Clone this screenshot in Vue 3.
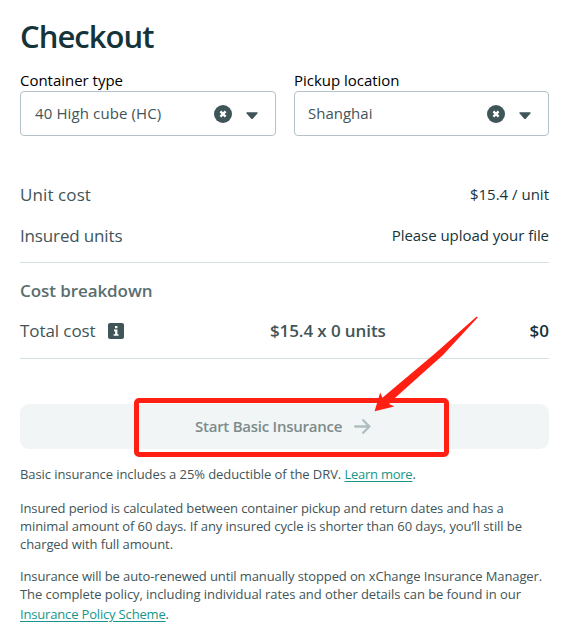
<template>
  <main class="checkout">
    <h1 class="title">Checkout</h1>

    <div class="fields">
      <div v-for="field in fields" :key="field.label" class="field">
        <label class="field-label">{{ field.label }}</label>
        <div class="select">
          <span class="select-value" :class="field.key">{{ field.value }}</span>
          <button type="button" class="icon-btn" aria-label="Clear">
            <svg class="clear-icon" viewBox="0 0 18 18">
              <circle cx="9" cy="9" r="9" />
              <path d="M6.4 6.4l5.2 5.2M11.6 6.4l-5.2 5.2" />
            </svg>
          </button>
          <button type="button" class="icon-btn" aria-label="Open">
            <svg class="caret-icon" viewBox="0 0 12 8">
              <path d="M1 0.2h10q1.2 0.2 0.4 1.2L7 6.6q-1 1-2 0L0.6 1.4Q-0.2 0.4 1 0.2z" />
            </svg>
          </button>
        </div>
      </div>
    </div>

    <section class="summary">
      <div class="row">
        <span class="row-label unit-cost">Unit cost</span>
        <span class="row-value">$15.4 / unit</span>
      </div>
      <div class="row">
        <span class="row-label insured">Insured units</span>
        <span class="row-value upload">Please upload your file</span>
      </div>
    </section>

    <section class="breakdown">
      <h2 class="subtitle">Cost breakdown</h2>
      <div class="total">
        <span class="row-label total-label">
          Total cost
          <svg class="info-icon" viewBox="0 0 16 16">
            <rect width="16" height="16" rx="2" />
            <path d="M7 3h2.4v2.2H7zM6 6.6h3.4v4.6h1.2v1.6H5.6v-1.6h1.5V8.2H6z" />
          </svg>
        </span>
        <strong class="formula">$15.4 x 0 units</strong>
        <strong class="sum">$0</strong>
      </div>
    </section>

    <div class="action">
      <button type="button" class="start-btn" disabled>
        <span class="start-text">Start Basic Insurance</span>
        <svg class="arrow-icon" viewBox="0 0 17 15">
          <path d="M1.2 7.5h14.2M9.2 1.3l6.2 6.2-6.2 6.2" />
        </svg>
      </button>
      <div class="highlight"></div>
      <svg class="pointer" viewBox="0 0 104 96">
        <path d="M0.6 95.2L6.2 76.5L8.4 81.8L61 37.5L102.4 0.8Q104 0.4 103.5 1.8L69 39L21.2 81.8L15.2 88L20.3 90.6z" />
      </svg>
    </div>

    <div class="notes">
      <p class="deductible">Basic insurance includes a 25% deductible of the DRV. <a href="#">Learn more</a>.</p>
      <p>
        <span class="line period">Insured period is calculated between container pickup and return dates and has a</span>
        <span class="line">minimal amount of 60 days. If any insured cycle is shorter than 60 days, you’ll still be</span>
        <span class="line">charged with full amount.</span>
      </p>
      <p>
        <span class="line renewal">Insurance will be auto-renewed until manually stopped on xChange Insurance Manager.</span>
        <span class="line rates">The complete policy, including individual rates and other details can be found in our</span>
        <span class="line policy"><a href="#">Insurance Policy Scheme</a>.</span>
      </p>
    </div>
  </main>
</template>

<script setup>
const fields = [
  { key: 'container', label: 'Container type', value: '40 High cube (HC)' },
  { key: 'pickup', label: 'Pickup location', value: 'Shanghai' }
]
</script>

<style>
body {
  background: #fff;
}
</style>

<style scoped>
.checkout {
  box-sizing: border-box;
  width: 573px;
  height: 639px;
  padding: 16px 24px 0 20px;
  overflow: hidden;
  font-family: "Segoe UI", "Open Sans", "Noto Sans", sans-serif;
  color: #3f5558;
  white-space: nowrap;
}

.title {
  margin: 0;
  height: 42px;
  line-height: 41px;
  font-size: 31px;
  font-weight: 600;
  letter-spacing: -0.95px;
  color: #14343a;
}

.fields {
  display: grid;
  grid-template-columns: 256px 255px;
  gap: 18px;
  margin-top: 12px;
}

.field-label {
  display: block;
  height: 21px;
  line-height: 21px;
  font-size: 15px;
  letter-spacing: -0.02px;
  color: #000;
}

.select {
  display: flex;
  align-items: center;
  box-sizing: border-box;
  height: 45px;
  padding: 0 17px 0 13px;
  border: 1px solid #b4c3c9;
  border-radius: 4px;
}

.select-value {
  flex: 1;
  margin-top: -2px;
  font-size: 15px;
}

.container {
  padding-left: 1px;
  letter-spacing: 0.12px;
}

.icon-btn {
  display: flex;
  padding: 0;
  border: 0;
  background: none;
}

.clear-icon {
  width: 18px;
  height: 18px;
  margin-right: 14px;
  fill: #3f5558;
}

.clear-icon path {
  stroke: #fff;
  stroke-width: 2.3;
}

.caret-icon {
  width: 12px;
  height: 8px;
  margin-top: 4px;
  fill: #3f5558;
}

.summary {
  margin-top: 38px;
  height: 88px;
  border-bottom: 1px solid #d5e1e1;
}

.row {
  display: flex;
  justify-content: space-between;
  align-items: center;
  height: 41px;
}

.row-label {
  font-size: 17px;
}

.unit-cost {
  letter-spacing: 0.1px;
}

.insured {
  letter-spacing: -0.15px;
}

.row-value {
  padding-bottom: 2px;
  font-size: 15px;
  color: #14343a;
}

.upload {
  letter-spacing: -0.05px;
}

.breakdown {
  height: 95px;
  border-bottom: 1px solid #d5e1e1;
}

.subtitle {
  margin: 0;
  padding-top: 8px;
  height: 39px;
  line-height: 40px;
  font-size: 17px;
  font-weight: 600;
  letter-spacing: -0.08px;
  color: #5a6e70;
}

.total {
  display: grid;
  grid-template-columns: 250px 1fr auto;
  align-items: center;
  height: 40px;
}

.total-label {
  display: flex;
  align-items: center;
  gap: 12px;
  letter-spacing: -0.08px;
}

.info-icon {
  width: 16px;
  height: 16px;
  margin-top: 1px;
  fill: #3f5558;
}

.info-icon path {
  fill: #fff;
}

.formula,
.sum {
  font-size: 17px;
  font-weight: 600;
}

.formula {
  letter-spacing: -0.1px;
}

.sum {
  color: #14343a;
}

.action {
  position: relative;
  margin-top: 45px;
}

.start-btn {
  display: flex;
  align-items: center;
  gap: 12px;
  width: 529px;
  height: 45px;
  padding: 0 0 0 175px;
  border: 0;
  border-radius: 9px;
  background: #f1f5f6;
  color: #7c8b8b;
  font-family: inherit;
  font-size: 15px;
  font-weight: 600;
}

.start-text {
  padding-bottom: 2px;
  letter-spacing: -0.25px;
}

.arrow-icon {
  width: 17px;
  height: 15px;
  fill: none;
  stroke: #aebdc0;
  stroke-width: 2.3;
  stroke-linecap: round;
  stroke-linejoin: round;
}

/* red marker drawn over the button */
.highlight {
  position: absolute;
  top: -6px;
  left: 114px;
  box-sizing: border-box;
  width: 315px;
  height: 59px;
  border: 5px solid #ff1f13;
  border-radius: 5px;
}

.pointer {
  position: absolute;
  top: -88px;
  left: 354px;
  width: 104px;
  height: 96px;
  fill: #ff1f13;
}

.notes {
  padding-top: 16px;
  font-size: 13px;
  line-height: 18px;
  letter-spacing: -0.085px;
}

.notes p {
  margin: 0 0 14px;
  height: 20px;
}

.notes p + p {
  height: 54px;
}

.line {
  display: block;
}

.deductible {
  letter-spacing: -0.08px;
}

.deductible a {
  letter-spacing: -0.25px;
}

.period {
  letter-spacing: -0.135px;
}

.renewal {
  letter-spacing: -0.115px;
}

.rates {
  letter-spacing: -0.07px;
}

.policy {
  line-height: 22px;
  letter-spacing: -0.17px;
}

a {
  color: #16968a;
  text-decoration: underline;
  text-underline-offset: 2px;
}
</style>
